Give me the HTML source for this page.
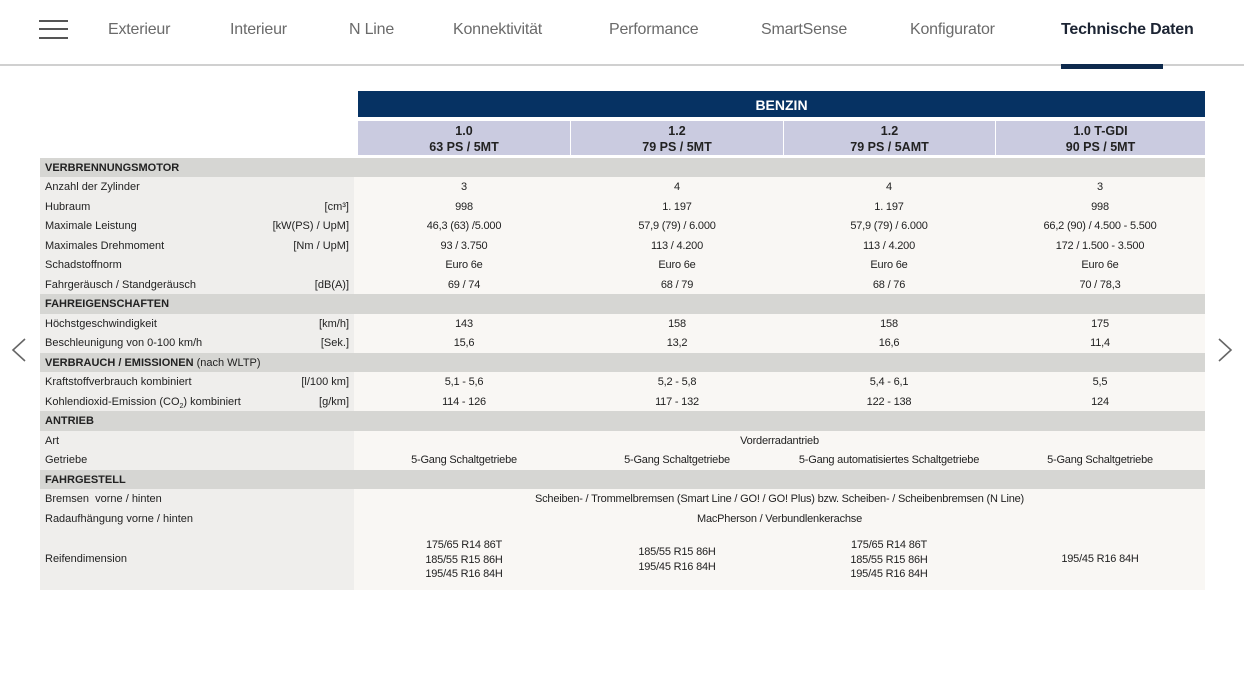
<!DOCTYPE html>
<html><head><meta charset="utf-8">
<style>
*{margin:0;padding:0;box-sizing:border-box}
body{width:1244px;height:700px;background:#fff;font-family:"Liberation Sans",sans-serif;position:relative;overflow:hidden;color:#222}
.nav{position:absolute;top:0;left:0;width:1244px;height:66px;border-bottom:2px solid #d0d0d0}
.nav span{position:absolute;top:21px;font-size:16px;color:#6a6a6a;letter-spacing:-0.2px}
.nav span.act{color:#1c2433;font-weight:600}
.ham{position:absolute;left:39px;width:29px;height:2px;background:#555}
.ul{position:absolute;left:1061px;top:64px;width:102px;height:5px;background:#0e2a4d}
.abs{position:absolute}
.hdr{left:358px;top:91px;width:847px;height:26px;background:#063263;color:#fff;font-weight:bold;font-size:14px;text-align:center;line-height:28px}
.sub{top:121px;height:34px;background:#cacbe0;font-size:12.5px;line-height:16px;text-align:center;padding-top:2px;color:#222;font-weight:600}
.row{position:absolute;left:40px;width:1165px;height:19.5px;font-size:11px;line-height:21px}
.row .lab{position:absolute;left:0;top:0;width:314px;height:100%;background:#efeeec;padding-left:5px}
.row .u{position:absolute;right:5px;top:0}
.row .val{position:absolute;left:314px;top:0;width:851px;height:100%;background:#f9f7f4}
.row .c{position:absolute;top:0;width:212px;text-align:center;letter-spacing:-0.2px}
.sec{background:#d6d6d3;font-weight:bold;padding-left:5px;font-size:11px}
.sec .n{font-weight:normal}
</style></head><body>
<div class="nav">
<div class="ham" style="top:20px"></div><div class="ham" style="top:28px"></div><div class="ham" style="top:37px"></div>
<span style="left:108px">Exterieur</span>
<span style="left:230px">Interieur</span>
<span style="left:349px">N Line</span>
<span style="left:453px">Konnektivität</span>
<span style="left:609px">Performance</span>
<span style="left:761px">SmartSense</span>
<span style="left:910px">Konfigurator</span>
<span class="act" style="left:1061px">Technische Daten</span>
</div>
<div class="ul"></div>
<div class="abs hdr">BENZIN</div>
<div class="abs sub" style="left:358px;width:212px">1.0<br>63 PS / 5MT</div>
<div class="abs sub" style="left:571px;width:212px">1.2<br>79 PS / 5MT</div>
<div class="abs sub" style="left:784px;width:211px">1.2<br>79 PS / 5AMT</div>
<div class="abs sub" style="left:996px;width:209px">1.0 T-GDI<br>90 PS / 5MT</div>

<div class="row sec" style="top:157.5px">VERBRENNUNGSMOTOR</div>
<div class="row" style="top:177px"><div class="lab">Anzahl der Zylinder</div><div class="val"><div class="c" style="left:4px">3</div><div class="c" style="left:217px">4</div><div class="c" style="left:429px">4</div><div class="c" style="left:640px">3</div></div></div>
<div class="row" style="top:196.5px"><div class="lab">Hubraum<span class="u">[cm³]</span></div><div class="val"><div class="c" style="left:4px">998</div><div class="c" style="left:217px">1. 197</div><div class="c" style="left:429px">1. 197</div><div class="c" style="left:640px">998</div></div></div>
<div class="row" style="top:216px"><div class="lab">Maximale Leistung<span class="u">[kW(PS) / UpM]</span></div><div class="val"><div class="c" style="left:4px">46,3 (63) /5.000</div><div class="c" style="left:217px">57,9 (79) / 6.000</div><div class="c" style="left:429px">57,9 (79) / 6.000</div><div class="c" style="left:640px">66,2 (90) / 4.500 - 5.500</div></div></div>
<div class="row" style="top:235.5px"><div class="lab">Maximales Drehmoment<span class="u">[Nm / UpM]</span></div><div class="val"><div class="c" style="left:4px">93 / 3.750</div><div class="c" style="left:217px">113 / 4.200</div><div class="c" style="left:429px">113 / 4.200</div><div class="c" style="left:640px">172 / 1.500 - 3.500</div></div></div>
<div class="row" style="top:255px"><div class="lab">Schadstoffnorm</div><div class="val"><div class="c" style="left:4px">Euro 6e</div><div class="c" style="left:217px">Euro 6e</div><div class="c" style="left:429px">Euro 6e</div><div class="c" style="left:640px">Euro 6e</div></div></div>
<div class="row" style="top:274.5px"><div class="lab">Fahrgeräusch / Standgeräusch<span class="u">[dB(A)]</span></div><div class="val"><div class="c" style="left:4px">69 / 74</div><div class="c" style="left:217px">68 / 79</div><div class="c" style="left:429px">68 / 76</div><div class="c" style="left:640px">70 / 78,3</div></div></div>
<div class="row sec" style="top:294px">FAHREIGENSCHAFTEN</div>
<div class="row" style="top:313.5px"><div class="lab">Höchstgeschwindigkeit<span class="u">[km/h]</span></div><div class="val"><div class="c" style="left:4px">143</div><div class="c" style="left:217px">158</div><div class="c" style="left:429px">158</div><div class="c" style="left:640px">175</div></div></div>
<div class="row" style="top:333px"><div class="lab">Beschleunigung von 0-100 km/h<span class="u">[Sek.]</span></div><div class="val"><div class="c" style="left:4px">15,6</div><div class="c" style="left:217px">13,2</div><div class="c" style="left:429px">16,6</div><div class="c" style="left:640px">11,4</div></div></div>
<div class="row sec" style="top:352.5px">VERBRAUCH / EMISSIONEN <span class="n">(nach WLTP)</span></div>
<div class="row" style="top:372px"><div class="lab">Kraftstoffverbrauch kombiniert<span class="u">[l/100 km]</span></div><div class="val"><div class="c" style="left:4px">5,1 - 5,6</div><div class="c" style="left:217px">5,2 - 5,8</div><div class="c" style="left:429px">5,4 - 6,1</div><div class="c" style="left:640px">5,5</div></div></div>
<div class="row" style="top:391.5px"><div class="lab">Kohlendioxid-Emission (CO<sub style="font-size:7px;line-height:0">2</sub>) kombiniert<span class="u">[g/km]</span></div><div class="val"><div class="c" style="left:4px">114 - 126</div><div class="c" style="left:217px">117 - 132</div><div class="c" style="left:429px">122 - 138</div><div class="c" style="left:640px">124</div></div></div>
<div class="row sec" style="top:411px">ANTRIEB</div>
<div class="row" style="top:430.5px"><div class="lab">Art</div><div class="val"><div class="c" style="left:0;width:851px">Vorderradantrieb</div></div></div>
<div class="row" style="top:450px"><div class="lab">Getriebe</div><div class="val"><div class="c" style="left:4px">5-Gang Schaltgetriebe</div><div class="c" style="left:217px">5-Gang Schaltgetriebe</div><div class="c" style="left:400px;width:270px">5-Gang automatisiertes Schaltgetriebe</div><div class="c" style="left:640px">5-Gang Schaltgetriebe</div></div></div>
<div class="row sec" style="top:469.5px">FAHRGESTELL</div>
<div class="row" style="top:489px"><div class="lab">Bremsen&nbsp; vorne / hinten</div><div class="val"><div class="c" style="left:0;width:851px">Scheiben- / Trommelbremsen (Smart Line / GO! / GO! Plus) bzw. Scheiben- / Scheibenbremsen (N Line)</div></div></div>
<div class="row" style="top:508.5px"><div class="lab">Radaufhängung vorne / hinten</div><div class="val"><div class="c" style="left:0;width:851px">MacPherson / Verbundlenkerachse</div></div></div>
<div class="row" style="top:528px;height:62px"><div class="lab" style="line-height:62px">Reifendimension</div><div class="val" style="line-height:14.5px">
<div class="c" style="left:4px;top:10px">175/65 R14 86T<br>185/55 R15 86H<br>195/45 R16 84H</div>
<div class="c" style="left:217px;top:17px">185/55 R15 86H<br>195/45 R16 84H</div>
<div class="c" style="left:429px;top:10px">175/65 R14 86T<br>185/55 R15 86H<br>195/45 R16 84H</div>
<div class="c" style="left:640px;top:24px">195/45 R16 84H</div></div></div>

<svg class="abs" style="left:8px;top:336px" width="20" height="28"><path d="M17 3 L5 14 L17 25" fill="none" stroke="#666" stroke-width="1.6"/></svg>
<svg class="abs" style="left:1215px;top:336px" width="20" height="28"><path d="M4 3 L16 14 L4 25" fill="none" stroke="#666" stroke-width="1.6"/></svg>
</body></html>
